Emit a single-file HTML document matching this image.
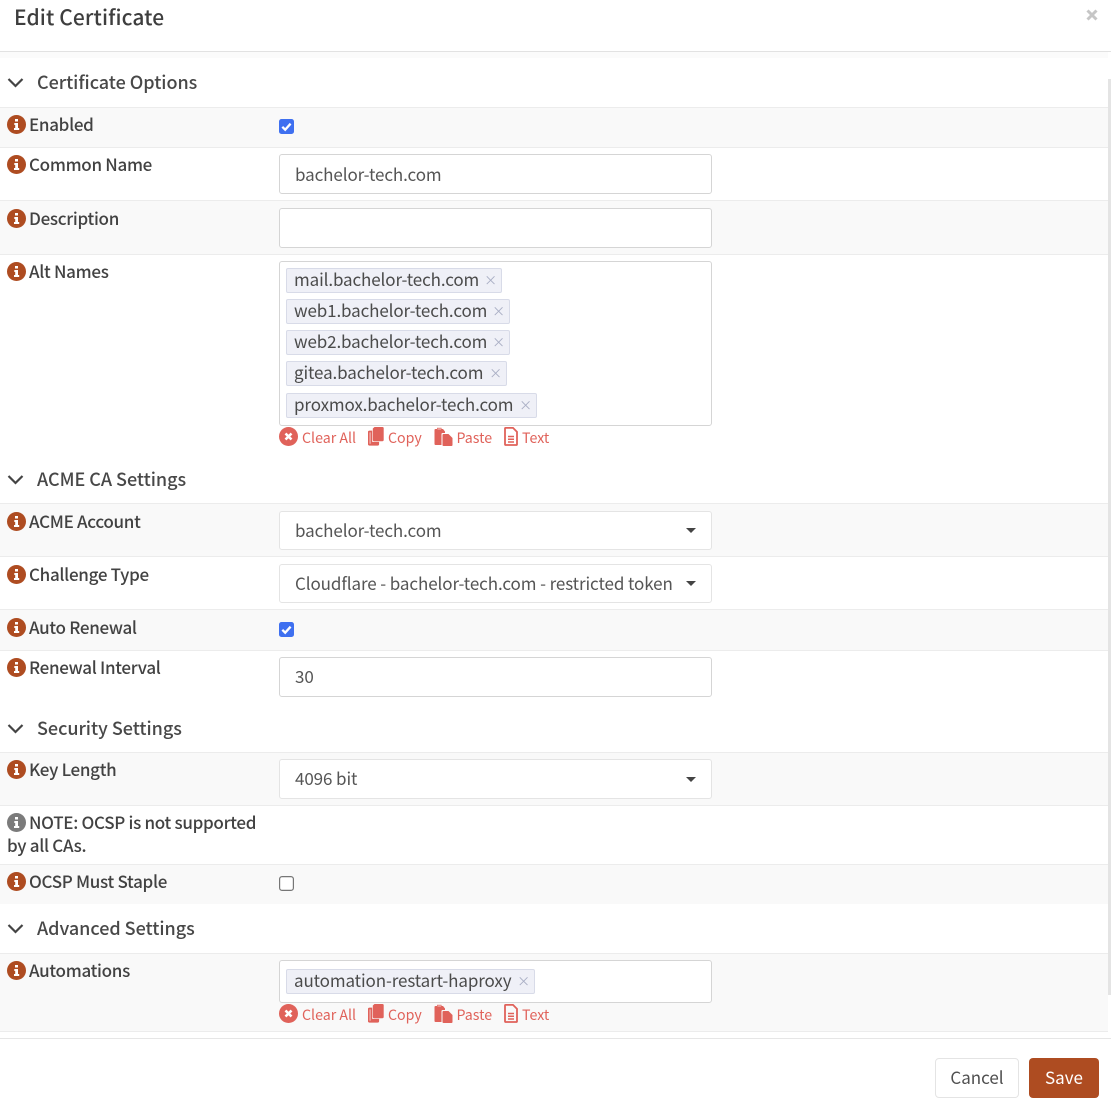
<!DOCTYPE html>
<html><head><meta charset="utf-8"><title>Edit Certificate</title>
<style>
*{box-sizing:border-box}
html,body{margin:0;padding:0}
body{width:1111px;height:1110px;position:relative;overflow:hidden;background:#fff;font-family:"Noto Sans CJK JP","Liberation Sans",sans-serif;color:#424242}
.a{position:absolute;white-space:nowrap}
.r{position:absolute;left:0;width:1108px;border-bottom:1px solid #ececec}
.g{background:#f9f9f9}
.h{font-size:18px;line-height:26px;font-weight:500;color:#484848;left:37px;letter-spacing:-.03px}
.l{font-size:17px;line-height:22px;font-weight:500;color:#424242;left:29px;letter-spacing:-.3px}
.i{position:absolute;left:7px;width:19px;height:19px}
.c{position:absolute;left:7px;width:17px;height:11px}
.f{position:absolute;left:279px;width:433px;background:#fff;border:1px solid #d5d5d5;border-radius:3px;font-size:17px;color:#555;padding-left:15px;white-space:nowrap;letter-spacing:-.1px}
.t{position:absolute;left:286px;height:25px;background:#eff0f7;border:1px solid #d8dbe8;border-radius:2px;font-size:17px;line-height:19px;color:#4b4b4b;padding-left:7px;white-space:nowrap;letter-spacing:-.12px}
.t b{font-weight:400;color:#a9aec4;font-size:13px;line-height:21px;position:absolute;right:4px;top:0}
.k{position:absolute;left:279px;width:15px;height:15px}
.o{position:absolute;font-size:14.2px;line-height:20px;color:#e0625a;white-space:nowrap}
.s{position:absolute;left:686px;width:0;height:0;border-left:5px solid transparent;border-right:5px solid transparent;border-top:5px solid #444}
svg{position:absolute;display:block}
</style></head><body>
<svg width="0" height="0"><defs>
<symbol id="inf" viewBox="0 0 19 19"><circle cx="9.5" cy="9.5" r="9.5" fill="#ae4c21"/><path d="M8 4h3v2.5H8zM7.3 8h3.7v5h1.2v2H7v-2h1.2v-3H7.3z" fill="#fff"/></symbol>
<symbol id="gi" viewBox="0 0 19 19"><circle cx="9.5" cy="9.5" r="9.5" fill="#7b7b7b"/><path d="M8 4h3v2.5H8zM7.3 8h3.7v5h1.2v2H7v-2h1.2v-3H7.3z" fill="#fff"/></symbol>
<symbol id="chev" viewBox="0 0 17 11"><path d="M1.5 2 8.5 9l7-7" fill="none" stroke="#444" stroke-width="2.2"/></symbol>
<symbol id="clr" viewBox="0 0 19 19"><circle cx="9.5" cy="9.5" r="9.5" fill="#e0625a"/><path d="M6.5 6.5l6 6m0-6l-6 6" stroke="#fff" stroke-width="2.6"/></symbol>
<symbol id="cpy" viewBox="0 0 16 19"><path d="M6.5 0h8a1.2 1.2 0 0 1 1.2 1.2V13a1.2 1.2 0 0 1-1.2 1.2H6a1.2 1.2 0 0 1-1.2-1.2V1.5z" fill="#e0625a"/><path d="M3.3 4.5H1.5a.7.7 0 0 0-.7.7V17a.7.7 0 0 0 .7.7h8a.7.7 0 0 0 .7-.7v-1.2H3.3z" fill="none" stroke="#e0625a" stroke-width="1.8"/></symbol>
<symbol id="pst" viewBox="0 0 19 19"><path d="M1.5 2h7.5l2 2.5V6H8.5a1 1 0 0 0-1 1v11H1.5a1 1 0 0 1-1-1V3a1 1 0 0 1 1-1z" fill="#e0625a"/><path d="M9.5 7h5l4 4v7a1 1 0 0 1-1 1h-8a1 1 0 0 1-1-1V8a1 1 0 0 1 1-1z" fill="#e0625a"/><path d="M3 .8h4.5v2.4H3z" fill="#e0625a"/><path d="M3.5 2h3.5" stroke="#f6c9c5" stroke-width="1"/></symbol>
<symbol id="txt" viewBox="0 0 14 19"><path d="M1 1.5a.6.6 0 0 1 .6-.6H9l4 4v12.5a.6.6 0 0 1-.6.6H1.6a.6.6 0 0 1-.6-.6z" fill="none" stroke="#e0625a" stroke-width="1.8"/><path d="M4 9.5h6M4 12.3h6M4 15h6" stroke="#e0625a" stroke-width="1.5"/></symbol>
<symbol id="chk" viewBox="0 0 15 15"><rect width="15" height="15" rx="2.5" fill="#3f70f0"/><path d="M3.3 7.8l2.9 2.9 5.4-6" fill="none" stroke="#fff" stroke-width="2.3"/></symbol>
<symbol id="unc" viewBox="0 0 15 15"><rect x=".6" y=".6" width="13.8" height="13.8" rx="2.5" fill="#fff" stroke="#767676" stroke-width="1.2"/></symbol>
</defs></svg>

<!-- header -->
<div class="a" style="left:14px;top:2px;font-size:21px;line-height:30px;font-weight:500;color:#3e3e3e;letter-spacing:.1px">Edit Certificate</div>
<svg style="left:1086px;top:9px" width="12" height="12" viewBox="0 0 12 12"><path d="M1.5 1.5l9 9m0-9l-9 9" stroke="#c6c6c6" stroke-width="3"/></svg>
<div class="a" style="left:0;top:51px;width:1111px;height:1px;background:#e2e2e2"></div>
<div class="a" style="left:0;top:52px;width:1108px;height:6px;background:#fbfbfb"></div>
<div class="a" style="left:1108px;top:79px;width:3px;height:916px;background:#e4e4e4"></div>

<!-- rows -->
<div class="r" style="top:107px;height:1px;background:#ececec"></div>
<div class="r g" style="top:108px;height:40px"></div>
<div class="r" style="top:148px;height:53px"></div>
<div class="r g" style="top:201px;height:54px"></div>
<div class="r" style="top:503px;height:1px"></div>
<div class="r g" style="top:504px;height:53px"></div>
<div class="r" style="top:557px;height:53px"></div>
<div class="r g" style="top:610px;height:41px"></div>
<div class="r" style="top:752px;height:1px"></div>
<div class="r g" style="top:753px;height:53px"></div>
<div class="r" style="top:806px;height:59px"></div>
<div class="r g" style="top:865px;height:39px;border-bottom:0"></div>
<div class="r" style="top:953px;height:1px"></div>
<div class="r g" style="top:954px;height:78px"></div>
<div class="a" style="left:0;top:1038px;width:1111px;height:1px;background:#e6e6e6"></div>

<!-- section heads -->
<svg class="c" style="top:77px"><use href="#chev"/></svg><div class="a h" style="top:69px">Certificate Options</div>
<svg class="c" style="top:474px"><use href="#chev"/></svg><div class="a h" style="top:466px">ACME CA Settings</div>
<svg class="c" style="top:723px"><use href="#chev"/></svg><div class="a h" style="top:715px">Security Settings</div>
<svg class="c" style="top:923px"><use href="#chev"/></svg><div class="a h" style="top:915px">Advanced Settings</div>

<!-- labels -->
<svg class="i" style="top:115px"><use href="#inf"/></svg><div class="a l" style="top:113px">Enabled</div>
<svg class="i" style="top:155px"><use href="#inf"/></svg><div class="a l" style="top:153px">Common Name</div>
<svg class="i" style="top:209px"><use href="#inf"/></svg><div class="a l" style="top:207px">Description</div>
<svg class="i" style="top:262px"><use href="#inf"/></svg><div class="a l" style="top:260px">Alt Names</div>
<svg class="i" style="top:512px"><use href="#inf"/></svg><div class="a l" style="top:510px">ACME Account</div>
<svg class="i" style="top:565px"><use href="#inf"/></svg><div class="a l" style="top:563px">Challenge Type</div>
<svg class="i" style="top:618px"><use href="#inf"/></svg><div class="a l" style="top:616px">Auto Renewal</div>
<svg class="i" style="top:658px"><use href="#inf"/></svg><div class="a l" style="top:656px">Renewal Interval</div>
<svg class="i" style="top:760px"><use href="#inf"/></svg><div class="a l" style="top:758px">Key Length</div>
<svg class="i" style="top:813px"><use href="#gi"/></svg><div class="a l" style="top:811px">NOTE: OCSP is not supported</div>
<div class="a l" style="top:834px;left:7px">by all CAs.</div>
<svg class="i" style="top:872px"><use href="#inf"/></svg><div class="a l" style="top:870px">OCSP Must Staple</div>
<svg class="i" style="top:961px"><use href="#inf"/></svg><div class="a l" style="top:959px">Automations</div>

<!-- controls -->
<svg class="k" style="top:119px"><use href="#chk"/></svg>
<div class="f" style="top:154px;height:40px;line-height:38px">bachelor-tech.com</div>
<div class="f" style="top:208px;height:40px"></div>
<div class="f" style="top:261px;height:165px"></div>
<div class="t" style="top:268px;width:216px">mail.bachelor-tech.com<b>×</b></div>
<div class="t" style="top:299px;width:224px">web1.bachelor-tech.com<b>×</b></div>
<div class="t" style="top:330px;width:224px">web2.bachelor-tech.com<b>×</b></div>
<div class="t" style="top:361px;width:221px">gitea.bachelor-tech.com<b>×</b></div>
<div class="t" style="top:393px;width:251px">proxmox.bachelor-tech.com<b>×</b></div>

<svg style="left:279px;top:427px" width="19" height="19"><use href="#clr"/></svg><div class="o" style="left:302px;top:428px">Clear All</div>
<svg style="left:368px;top:427px" width="16" height="19"><use href="#cpy"/></svg><div class="o" style="left:388px;top:428px">Copy</div>
<svg style="left:434px;top:427px" width="19" height="19"><use href="#pst"/></svg><div class="o" style="left:456.5px;top:428px">Paste</div>
<svg style="left:504px;top:427px" width="14" height="19"><use href="#txt"/></svg><div class="o" style="left:522px;top:428px">Text</div>

<div class="f" style="top:511px;height:39px;line-height:35px;border-color:#e4e4e4">bachelor-tech.com</div><div class="s" style="top:528px"></div>
<div class="f" style="top:564px;height:39px;line-height:35px;border-color:#e4e4e4">Cloudflare - bachelor-tech.com - restricted token</div><div class="s" style="top:581px"></div>
<svg class="k" style="top:622px"><use href="#chk"/></svg>
<div class="f" style="top:657px;height:40px;line-height:36px">30</div>
<div class="f" style="top:759px;height:40px;line-height:36px;border-color:#e4e4e4">4096 bit</div><div class="s" style="top:777px"></div>
<svg class="k" style="top:876px"><use href="#unc"/></svg>

<div class="f" style="top:960px;height:43px"></div>
<div class="t" style="top:969px;width:249px">automation-restart-haproxy<b>×</b></div>
<svg style="left:279px;top:1004px" width="19" height="19"><use href="#clr"/></svg><div class="o" style="left:302px;top:1005px">Clear All</div>
<svg style="left:368px;top:1004px" width="16" height="19"><use href="#cpy"/></svg><div class="o" style="left:388px;top:1005px">Copy</div>
<svg style="left:434px;top:1004px" width="19" height="19"><use href="#pst"/></svg><div class="o" style="left:456.5px;top:1005px">Paste</div>
<svg style="left:504px;top:1004px" width="14" height="19"><use href="#txt"/></svg><div class="o" style="left:522px;top:1005px">Text</div>

<!-- footer -->
<div class="a" style="left:935px;top:1058px;width:84px;height:40px;border:1px solid #e4e4e4;border-radius:4px;background:#fff;text-align:center;font-size:17px;line-height:36px;color:#4f4f4f">Cancel</div>
<div class="a" style="left:1029px;top:1058px;width:70px;height:40px;border-radius:4px;background:#ae4c21;text-align:center;font-size:17px;line-height:38px;color:#fff">Save</div>
</body></html>
